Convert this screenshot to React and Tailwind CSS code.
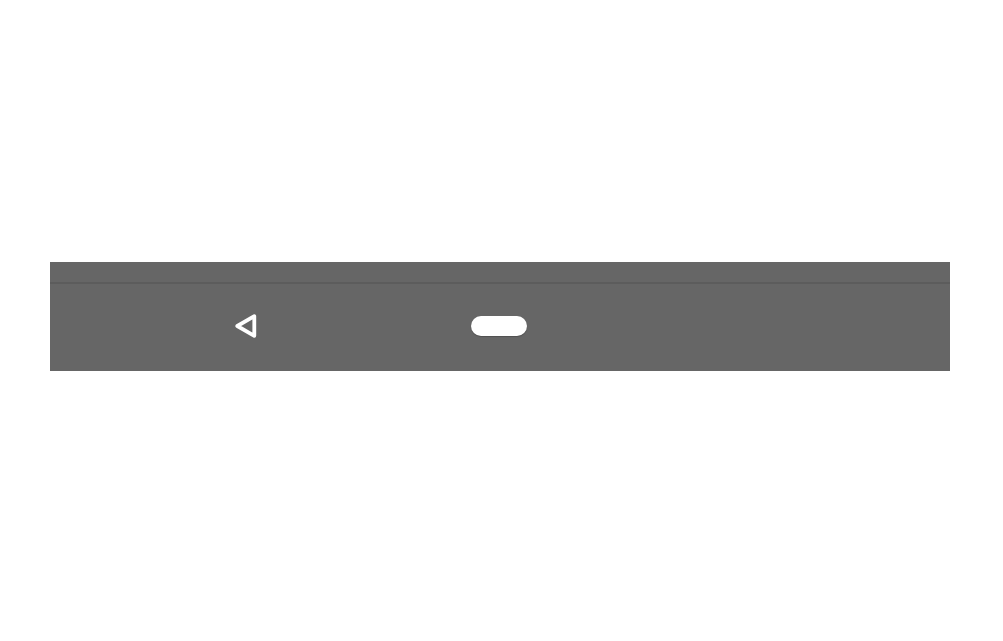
import React from "react"

const BackIcon = () => (
    <svg className="w-6 h-7" viewBox="0 0 24 28" fill="none" stroke="white" strokeWidth="3.8" strokeLinejoin="round" aria-hidden="true">
        <path d="M3.3 14 L20.3 4.2 V23.8 Z" />
    </svg>
);

const NavigationBar = () => {
    return (
        <nav className="w-full bg-[#666666]" aria-label="System navigation">
            <div className="h-5"></div>
            <div className="grid grid-cols-3 items-center h-[89px] pl-[69px] pr-[71px] pb-[3px] border-t-2 border-[#5c5c5c]">
                <button type="button" aria-label="Back" className="justify-self-center">
                    <BackIcon />
                </button>
                <button type="button" aria-label="Home" 
                    className="justify-self-center w-14 h-5 rounded-full bg-white shadow-[0_1px_1px_#505050]">
                </button>
            </div>
        </nav>
    );
};

const App = () => {
    return (
        <main className="min-h-screen bg-white pt-[262px] pl-[50px] pr-[53px]">
            <NavigationBar />
        </main>
    );
};

export default App;
